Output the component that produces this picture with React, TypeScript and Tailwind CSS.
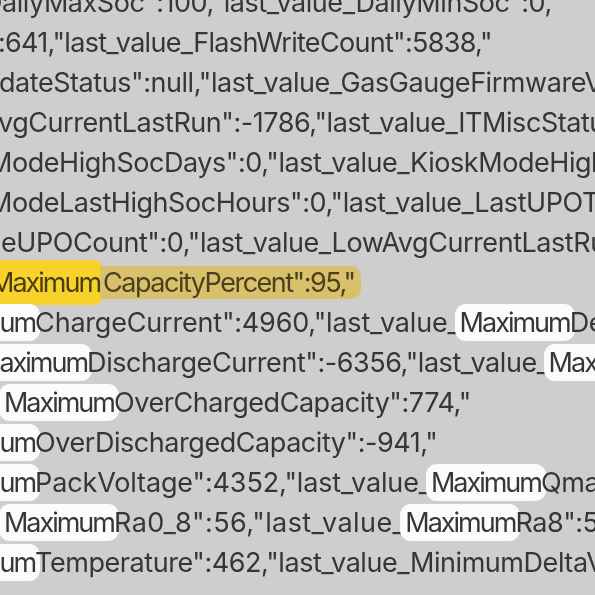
import React from "react";

type Seg = { t: string; k?: "w" | "y" | "m"; c?: string };
type Line = { ml: string; segs: Seg[] };

const lines: Line[] = [
  { ml: "-ml-[17px]", segs: [{ t: 'DailyMaxSoc":100,"last_value_DailyMinSoc":0,"' }] },
  { ml: "-ml-[2px]", segs: [{ t: ':641,"last_value_FlashWriteCount":5838,"', c: "tracking-[-0.7px]" }] },
  { ml: "-ml-[1px]", segs: [{ t: 'dateStatus":null,"last_value_GasGaugeFirmwareVersion' }] },
  { ml: "-ml-[2px]", segs: [{ t: 'vgCurrentLastRun":-1786,"last_value_ITMiscStatus' }] },
  { ml: "-ml-[12px]", segs: [{ t: 'ModeHighSocDays":0,"last_value_KioskModeHighSoc' }] },
  { ml: "-ml-[12px]", segs: [{ t: 'ModeLastHighSocHours":0,"last_value_LastUPOTime' }] },
  { ml: "ml-[1px]", segs: [{ t: 'eUPOCount":0,"last_value_LowAvgCurrentLastRun' }] },
  {
    ml: "-ml-[10px]",
    segs: [
      { t: "Maximum", k: "y" },
      { t: 'CapacityPercent":95,"', k: "m" },
    ],
  },
  {
    ml: "-ml-[75px]",
    segs: [
      { t: "Maximum", k: "w" },
      { t: 'ChargeCurrent":4960,"last_value_', c: "tracking-[-0.2px]" },
      { t: "Maximum", k: "w" },
      { t: "DeltaVoltage" },
    ],
  },
  {
    ml: "-ml-[23px]",
    segs: [
      { t: "Maximum", k: "w" },
      { t: 'DischargeCurrent":-6356,"last_value_' },
      { t: "Maximum", k: "w" },
      { t: "FCC" },
    ],
  },
  {
    ml: "-ml-[8px]",
    segs: [
      { t: "_" },
      { t: "Maximum", k: "w" },
      { t: 'OverChargedCapacity":774,"' },
    ],
  },
  {
    ml: "-ml-[75px]",
    segs: [
      { t: "Maximum", k: "w" },
      { t: 'OverDischargedCapacity":-941,"' },
    ],
  },
  {
    ml: "-ml-[75px]",
    segs: [
      { t: "Maximum", k: "w" },
      { t: 'PackVoltage":4352,"last_value_', c: "tracking-[-0.15px]" },
      { t: "Maximum", k: "w" },
      { t: "Qmax" },
    ],
  },
  {
    ml: "-ml-[8px]",
    segs: [
      { t: "_" },
      { t: "Maximum", k: "w" },
      { t: 'Ra0_8":56,"last_value_', c: "tracking-[0.4px]" },
      { t: "Maximum", k: "w" },
      { t: 'Ra8":56,"' },
    ],
  },
  {
    ml: "-ml-[75px]",
    segs: [
      { t: "Maximum", k: "w" },
      { t: 'Temperature":462,"last_value_MinimumDeltaVoltage' },
    ],
  },
];

function SegView({ s }: { s: Seg }) {
  if (s.k === "w")
    return (
      <span className="bg-[#fbfbfb] rounded-[11px] px-[5px] -mx-[5px] py-[2px] tracking-[-2px]">
        {s.t}
      </span>
    );
  if (s.k === "y")
    return (
      <span className="bg-[#f7d22a] rounded-[9px] pl-[4px] pr-[3px] -ml-[4px] -mr-[3px] py-[6px] text-[#4a3e10] tracking-[-2px]">
        {s.t}
      </span>
    );
  if (s.k === "m")
    return (
      <span className="bg-[#d9c06a] rounded-r-[10px] pl-[3px] pr-[6px] -mr-[6px] py-0 text-[#4a4020] tracking-[-1.5px]">
        {s.t}
      </span>
    );
  return <span className={s.c}>{s.t}</span>;
}

export default function App() {
  return (
    <div className="w-[595px] h-[595px] overflow-hidden bg-[#cecece]">
      <div
        className="flex flex-col -mt-[17px] text-[#363636] text-[27px] leading-[40px] tracking-[-0.45px] blur-[0.4px]"
        style={{ fontFamily: "Inter, 'Noto Sans', sans-serif" }}
      >
        {lines.map((l, i) => (
          <div key={i} className={`whitespace-nowrap ${l.ml}`}>
            {l.segs.map((s, j) => (
              <SegView key={j} s={s} />
            ))}
          </div>
        ))}
      </div>
    </div>
  );
}
